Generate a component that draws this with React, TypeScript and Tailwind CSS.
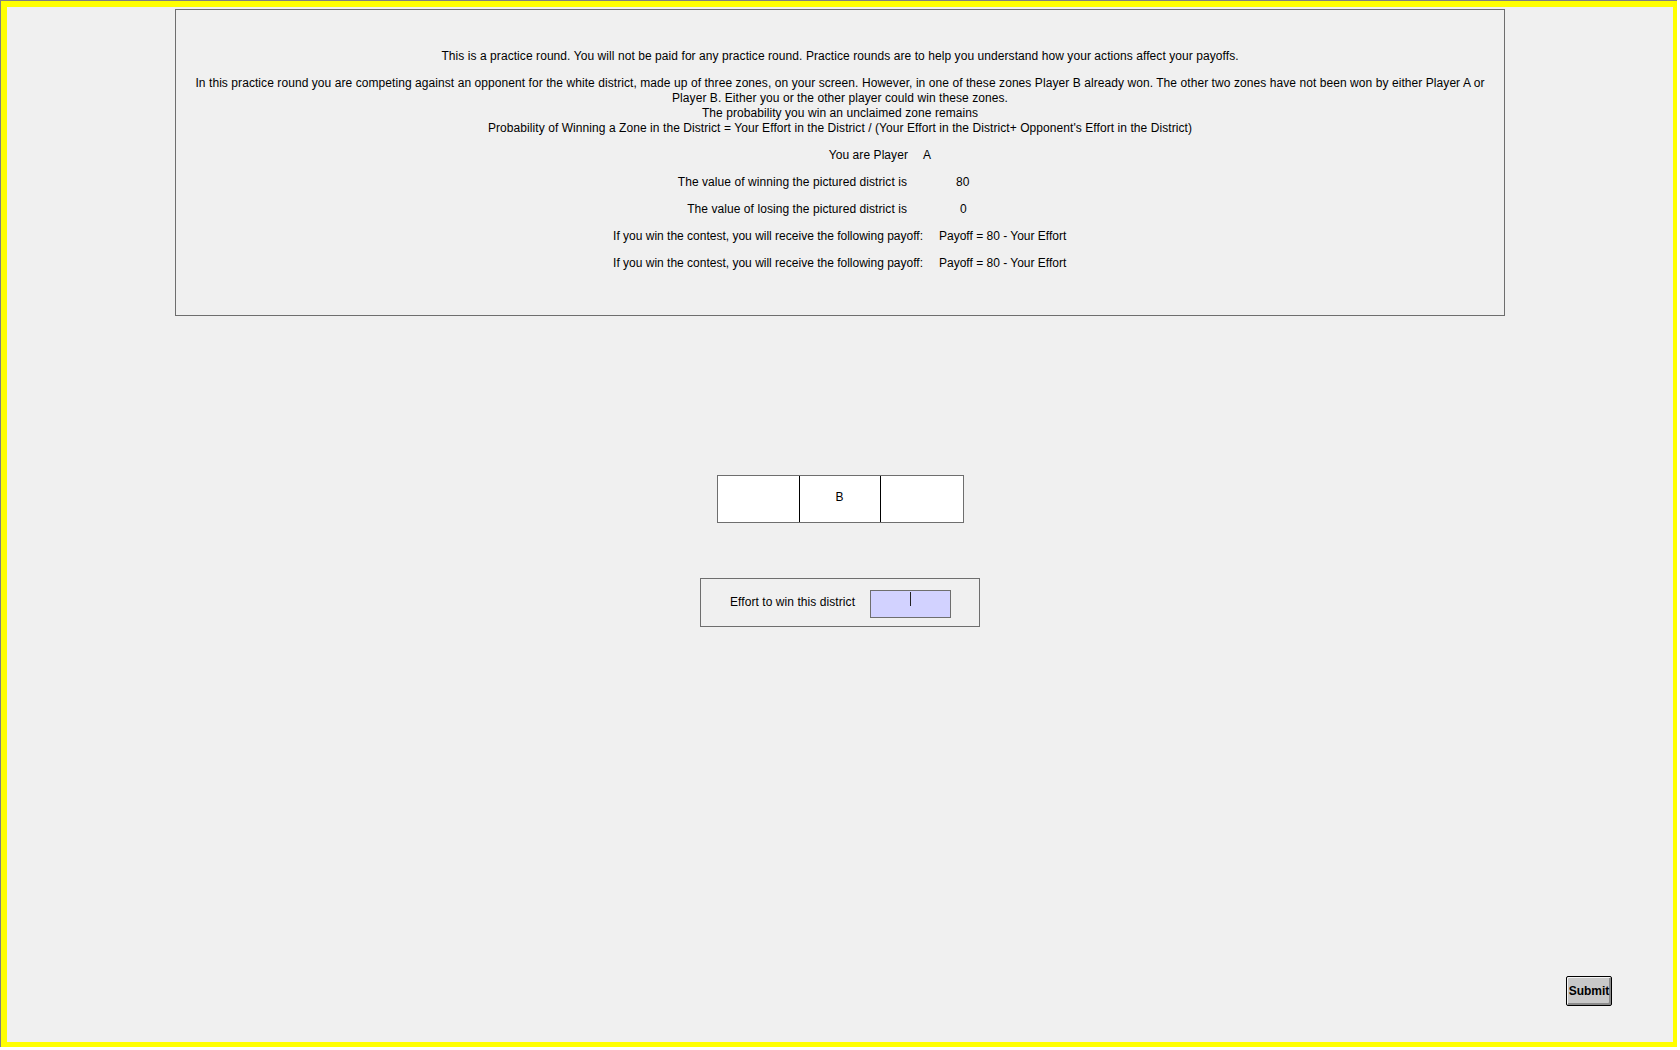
const font = { fontFamily: '"Liberation Sans", Arial, sans-serif' };

function InfoRow({ label, labelWidth, className = "", children }: { label: string; labelWidth: string; className?: string; children: React.ReactNode }) {
  return (
    <div className={`flex h-[15px] whitespace-nowrap ${className}`}>
      <span className={`${labelWidth} text-right`}>{label}</span>
      {children}
    </div>
  );
}

export default function App() {
  return (
    <div className="w-[1680px] h-[1050px] bg-white text-[12px] leading-[15px] tracking-[0.07px] text-black" style={font}>
      <div className="w-[1677px] h-[1047px] border-l border-t border-[#808080] bg-[#ffff00] pl-[6px] pt-[6px] pr-[4px] pb-[5px]">
        <div className="h-full bg-[#f0f0f0] flex flex-col pt-[2px]">
          {/* instructions panel */}
          <div className="mx-auto w-[1330px] h-[307px] border border-[#6e6e6e] pt-[39px] text-center">
            <div className="whitespace-nowrap">
              This is a practice round. You will not be paid for any practice round. Practice rounds are to help you understand how your actions affect your payoffs.
            </div>
            <div className="mt-[12px] whitespace-nowrap">
              In this practice round you are competing against an opponent for the white district, made up of three zones, on your screen. However, in one of these zones Player B already won. The other two zones have not been won by either Player A or
              <br />
              Player B. Either you or the other player could win these zones.
              <br />
              The probability you win an unclaimed zone remains
              <br />
              Probability of Winning a Zone in the District = Your Effort in the District / (Your Effort in the District+ Opponent's Effort in the District)
            </div>

            <div className="mt-[12px] flex flex-col gap-[12px] text-left">
              <InfoRow label="You are Player" labelWidth="w-[732px]">
                <span className="ml-[15px]">A</span>
              </InfoRow>
              <InfoRow label="The value of winning the pictured district is" labelWidth="w-[731px]">
                <span className="ml-[49px]">80</span>
              </InfoRow>
              <InfoRow label="The value of losing the pictured district is" labelWidth="w-[731px]">
                <span className="ml-[53px]">0</span>
              </InfoRow>
              <InfoRow label="If you win the contest, you will receive the following payoff:" labelWidth="w-[747px]" className="tracking-normal">
                <span className="ml-[16px]">Payoff = 80 - Your Effort</span>
              </InfoRow>
              <InfoRow label="If you win the contest, you will receive the following payoff:" labelWidth="w-[747px]" className="tracking-normal">
                <span className="ml-[16px]">Payoff = 80 - Your Effort</span>
              </InfoRow>
            </div>
          </div>

          {/* district zones */}
          <div className="mx-auto mt-[159px] w-[247px] h-[48px] border border-[#6e6e6e] bg-white grid grid-cols-[81px_81px_83px]">
            <div />
            <div className="border-l border-black flex items-center justify-center pb-[4px]">B</div>
            <div className="border-l border-black" />
          </div>

          {/* effort entry */}
          <div className="mx-auto mt-[55px] w-[280px] h-[49px] border border-[#6e6e6e] flex items-start pl-[29px] pt-[11px]">
            <span className="mt-[5px] whitespace-nowrap">Effort to win this district</span>
            <div className="ml-[15px] w-[81px] h-[28px] border border-[#6e6e6e] bg-[#d2d2ff] flex justify-center pt-[1px]">
              <span className="w-px h-[14px] bg-[#222]" />
            </div>
          </div>

          <div className="mt-auto mb-[36px] mr-[61px] self-end">
            <button className="w-[46px] h-[30px] border border-black rounded-[2px] bg-[#c8c8c8] shadow-[inset_1px_1px_0_#f4f4f4,inset_-2px_-2px_0_#8a8a8a] font-bold text-[12px] tracking-normal text-black flex items-center justify-center">
              Submit
            </button>
          </div>
        </div>
      </div>
    </div>
  );
}
